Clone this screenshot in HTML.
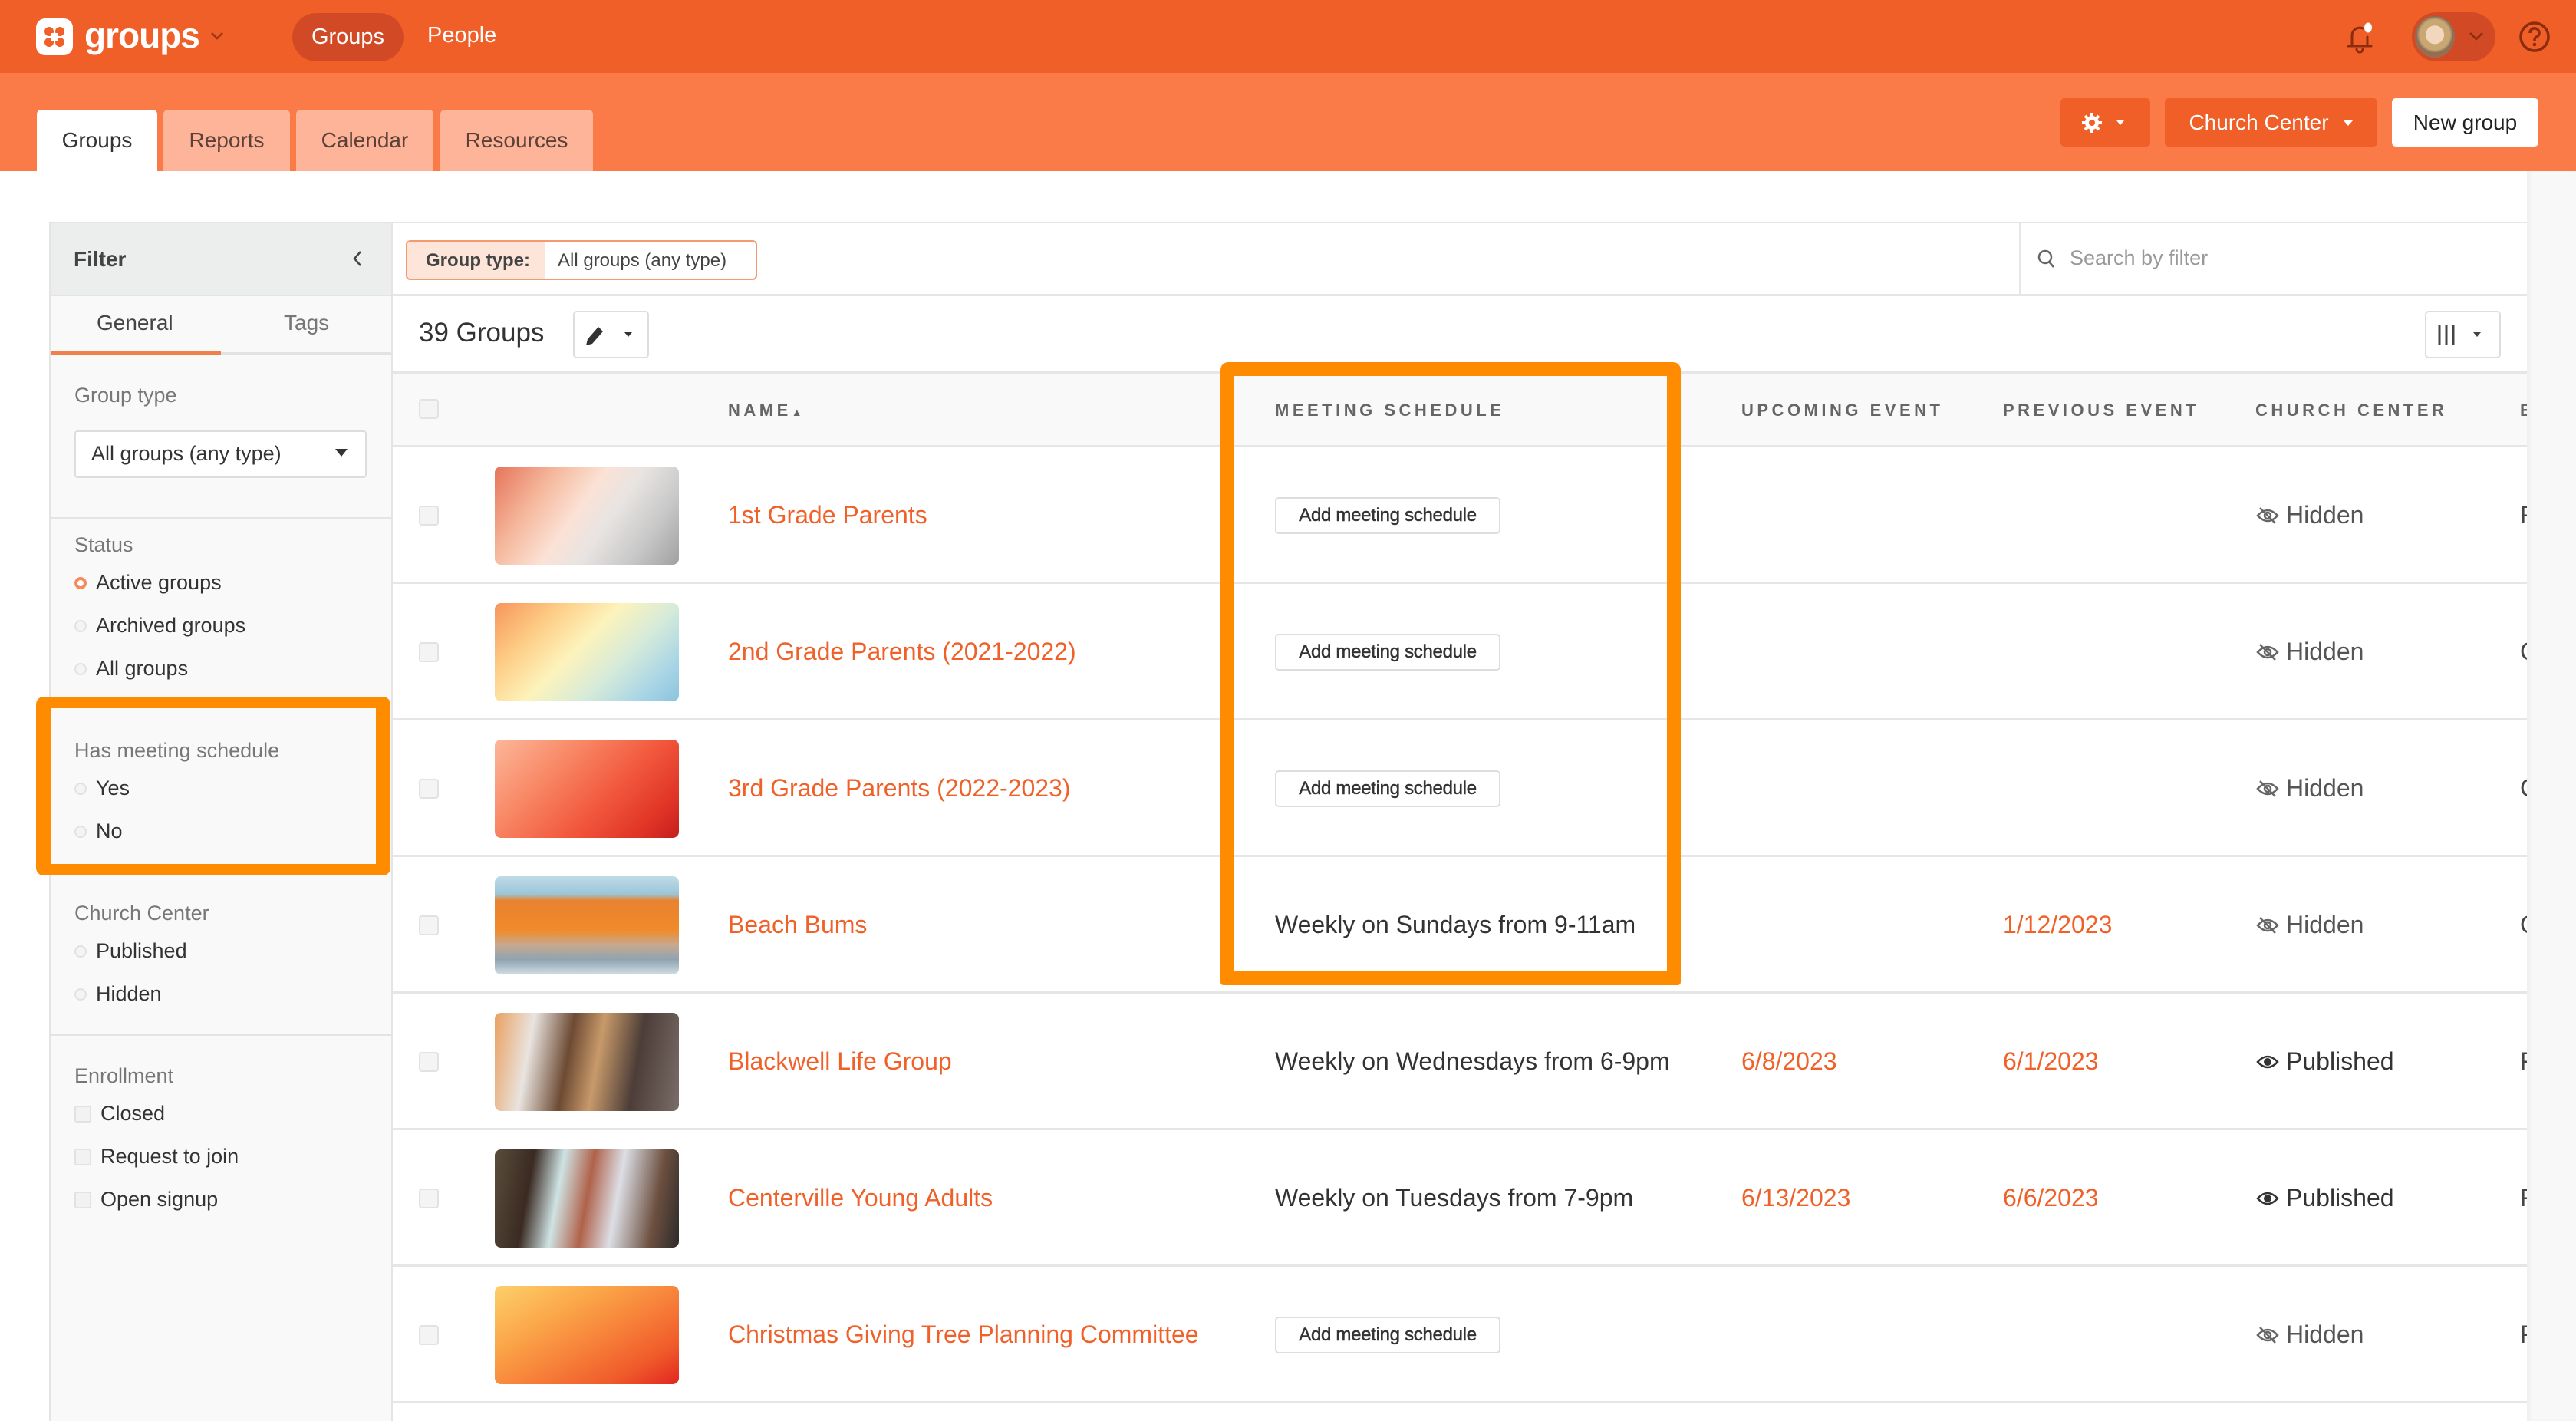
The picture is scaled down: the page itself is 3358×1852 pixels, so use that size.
<!DOCTYPE html>
<html><head><meta charset="utf-8"><style>
*{box-sizing:border-box;margin:0;padding:0}
body{width:3358px;height:1852px;overflow:hidden;background:#fff;font-family:"Liberation Sans",sans-serif;position:relative;color:#333}
.a{position:absolute}
.top{left:0;top:0;width:3358px;height:95px;background:#f05f28}
.sub{left:0;top:95px;width:3358px;height:128px;background:#fb7b48}
.tab{top:143px;height:80px;background:#fdb498;border-radius:6px 6px 0 0;font-size:28px;color:#5a4038;display:flex;align-items:center;justify-content:center}
.btn{border-radius:5px;display:flex;align-items:center;justify-content:center;font-size:28px}
.side{left:64px;top:289px;width:448px;height:1563px;background:#f9f9f9;border-left:2px solid #e4e4e4;border-right:2px solid #e4e4e4}
.lbl{font-size:27px;color:#777}
.opt{font-size:27px;color:#333;display:flex;align-items:center;gap:12px}
.rad{width:16px;height:16px;border-radius:50%;border:2px solid #e2e2e2;background:#f4f4f4}
.chk{width:22px;height:22px;border-radius:3px;border:2px solid #e2e2e2;background:#f2f2f2}
.th{font-size:22px;font-weight:bold;letter-spacing:4.5px;color:#666;top:522px}
.row{left:512px;width:2782px;height:178px;border-bottom:3px solid #e6e6e6}
.thumb{left:133px;top:25px;width:240px;height:128px;border-radius:8px}
.nm{left:437px;font-size:32px;color:#f0612a;top:70px}
.ams{left:1150px;top:65px;width:294px;height:48px;border:2px solid #ddd;border-radius:5px;font-size:24px;color:#333;display:flex;align-items:center;justify-content:center;letter-spacing:-0.3px;-webkit-text-stroke:0.5px #333}
.sch{left:1150px;top:70px;font-size:32px;color:#333}
.dt{font-size:32px;color:#f0612a;top:70px}
.cc{left:2428px;top:70px;font-size:32px;color:#555;display:flex;align-items:center;gap:8px}
.cbx{left:34px;top:76px;width:26px;height:26px;border:2px solid #e2e2e2;border-radius:4px;background:#f4f4f4}
.ex{left:2773px;top:70px;font-size:32px;color:#444}
</style></head><body>
<div class="a top"></div>
<div class="a" style="left:47px;top:24px;width:48px;height:48px;background:#fff;border-radius:12px"></div>
<svg class="a" style="left:47px;top:24px" width="48" height="48" viewBox="0 0 48 48"><circle cx="17" cy="17" r="6" fill="#f05f28"/><circle cx="31" cy="17" r="6" fill="#f05f28"/><circle cx="17" cy="31" r="6" fill="#f05f28"/><circle cx="31" cy="31" r="6" fill="#f05f28"/><rect x="19" y="19" width="10" height="10" fill="#fff"/></svg>
<div class="a" style="left:110px;top:19px;font-size:46px;color:#fff;font-weight:bold;letter-spacing:-1px">groups</div>
<svg class="a" style="left:274px;top:40px" width="18" height="14"><path d="M2 3 L9 10 L16 3" stroke="#9c3513" stroke-width="2.5" fill="none"/></svg>
<div class="a" style="left:381px;top:17px;width:145px;height:63px;background:#d24a25;border-radius:32px;color:#fff;font-size:29px;display:flex;align-items:center;justify-content:center">Groups</div>
<div class="a" style="left:557px;top:30px;color:#fff;font-size:29px">People</div>
<svg class="a" style="left:3052px;top:24px" width="48" height="48" viewBox="0 0 48 48"><path d="M14 36 V22 a10 10 0 0 1 14 -9 M34 24 V36 M9 36 H39 M20 40 a4 4 0 0 0 8 0" stroke="#8a2c0d" stroke-width="3" fill="none" stroke-linecap="round"/><ellipse cx="35" cy="12" rx="5" ry="6.5" fill="#fff"/></svg>
<div class="a" style="left:3144px;top:16px;width:109px;height:64px;background:#d24a25;border-radius:32px"></div>
<div class="a" style="left:3148px;top:21px;width:52px;height:54px;border-radius:50%;background:radial-gradient(circle at 50% 45%,#f2d7be 0 30%,#c9a772 31% 50%,#8a6e56 60%,#d36b2e 100%)"></div>
<svg class="a" style="left:3218px;top:40px" width="20" height="14"><path d="M2 3 L10 11 L18 3" stroke="#8a2c0d" stroke-width="2.5" fill="none"/></svg>
<svg class="a" style="left:3282px;top:26px" width="44" height="44" viewBox="0 0 44 44"><circle cx="22" cy="22" r="18" stroke="#8a2c0d" stroke-width="3.5" fill="none"/><path d="M16 17 a6 6 0 1 1 8 5.5 c-2 1 -2 2.5 -2 4.5" stroke="#8a2c0d" stroke-width="3.5" fill="none"/><circle cx="22" cy="32" r="2.3" fill="#8a2c0d"/></svg>

<div class="a sub"></div>
<div class="a tab" style="left:48px;width:157px;background:#fff;color:#333">Groups</div>
<div class="a tab" style="left:213px;width:165px">Reports</div>
<div class="a tab" style="left:386px;width:179px">Calendar</div>
<div class="a tab" style="left:574px;width:199px">Resources</div>
<div class="a btn" style="left:2686px;top:128px;width:117px;height:63px;background:#f05f28">
<svg width="64" height="30" viewBox="0 0 64 30"><g transform="translate(14,15)" fill="#fff"><circle r="9"/><g stroke="#fff" stroke-width="4"><path d="M0 -13V13M-13 0H13M-9 -9L9 9M-9 9L9 -9"/></g><circle r="4" fill="#f05f28"/></g><path d="M46 12 L56 12 L51 18Z" fill="#fff"/></svg></div>
<div class="a btn" style="left:2822px;top:128px;width:277px;height:63px;background:#f05f28;color:#fff;gap:18px">Church Center <svg width="14" height="8"><path d="M0 0H14L7 8Z" fill="#fff"/></svg></div>
<div class="a btn" style="left:3118px;top:128px;width:191px;height:63px;background:#fff;color:#222">New group</div>

<div class="a side"></div>
<div class="a" style="left:64px;top:289px;width:448px;height:97px;background:#eceeee;border:2px solid #e4e4e4"></div>
<div class="a" style="left:96px;top:322px;font-size:28px;font-weight:bold;color:#444">Filter</div>
<svg class="a" style="left:459px;top:326px" width="14" height="22"><path d="M11 2 L3 11 L11 20" stroke="#444" stroke-width="2.5" fill="none"/></svg>
<div class="a" style="left:126px;top:405px;font-size:28px;color:#444">General</div>
<div class="a" style="left:370px;top:405px;font-size:28px;color:#777">Tags</div>
<div class="a" style="left:66px;top:458px;width:222px;height:5px;background:#f0804b"></div>
<div class="a" style="left:288px;top:459px;width:222px;height:4px;background:#e2e2e2"></div>
<div class="a lbl" style="left:97px;top:500px">Group type</div>
<div class="a" style="left:97px;top:561px;width:381px;height:62px;background:#fff;border:2px solid #ddd;border-radius:4px"></div>
<div class="a" style="left:119px;top:576px;font-size:27px;color:#333">All groups (any type)</div>
<svg class="a" style="left:437px;top:585px" width="16" height="10"><path d="M0 0H16L8 10Z" fill="#333"/></svg>
<div class="a" style="left:66px;top:674px;width:444px;height:2px;background:#e4e4e4"></div>
<div class="a lbl" style="left:97px;top:695px">Status</div>
<div class="a opt" style="left:97px;top:744px"><div class="rad" style="border:4px solid #f58a5a;background:#fff"></div>Active groups</div>
<div class="a opt" style="left:97px;top:800px"><div class="rad"></div>Archived groups</div>
<div class="a opt" style="left:97px;top:856px"><div class="rad"></div>All groups</div>
<div class="a lbl" style="left:97px;top:963px">Has meeting schedule</div>
<div class="a opt" style="left:97px;top:1012px"><div class="rad"></div>Yes</div>
<div class="a opt" style="left:97px;top:1068px"><div class="rad"></div>No</div>
<div class="a" style="left:47px;top:908px;width:462px;height:233px;border:19px solid #ff8c00;border-width:15px 19px 15px 19px;border-radius:10px"></div>
<div class="a lbl" style="left:97px;top:1175px">Church Center</div>
<div class="a opt" style="left:97px;top:1224px"><div class="rad"></div>Published</div>
<div class="a opt" style="left:97px;top:1280px"><div class="rad"></div>Hidden</div>
<div class="a" style="left:66px;top:1348px;width:444px;height:2px;background:#e4e4e4"></div>
<div class="a lbl" style="left:97px;top:1387px">Enrollment</div>
<div class="a opt" style="left:97px;top:1436px"><div class="chk"></div>Closed</div>
<div class="a opt" style="left:97px;top:1492px"><div class="chk"></div>Request to join</div>
<div class="a opt" style="left:97px;top:1548px"><div class="chk"></div>Open signup</div>

<div class="a" style="left:512px;top:289px;width:2782px;height:97px;border-top:2px solid #e6e6e6;border-bottom:3px solid #e6e6e6"></div>
<div class="a" style="left:529px;top:313px;width:458px;height:52px;border:2px solid #f59a6e;border-radius:6px;background:#fff;overflow:hidden">
<div class="a" style="left:0;top:0;width:180px;height:52px;background:#fde5d9"></div>
<div class="a" style="left:24px;top:11px;font-size:24px;color:#444;font-weight:bold">Group type:</div>
<div class="a" style="left:196px;top:11px;font-size:24px;color:#444">All groups (any type)</div></div>
<div class="a" style="left:2632px;top:289px;width:2px;height:97px;background:#e6e6e6"></div>
<svg class="a" style="left:2655px;top:324px" width="24" height="28"><circle cx="11" cy="11" r="8" stroke="#666" stroke-width="2.5" fill="none"/><path d="M16 17 L22 24" stroke="#666" stroke-width="2.5"/></svg>
<div class="a" style="left:2698px;top:321px;font-size:27px;color:#999">Search by filter</div>

<div class="a" style="left:546px;top:414px;font-size:35px;color:#333">39 Groups</div>
<div class="a" style="left:747px;top:405px;width:99px;height:62px;border:2px solid #ddd;border-radius:5px;background:#fff"></div>
<svg class="a" style="left:760px;top:420px" width="70" height="34"><path d="M4 30 L6 22 L20 6 L26 12 L12 28 Z" fill="#333"/><path d="M54 13 H64 L59 19Z" fill="#333"/></svg>
<div class="a" style="left:3161px;top:405px;width:99px;height:62px;border:2px solid #ddd;border-radius:5px;background:#fff"></div>
<svg class="a" style="left:3176px;top:420px" width="70" height="34"><path d="M4 3 V30 M13 3 V30 M22 3 V30" stroke="#444" stroke-width="3"/><path d="M48 13 H58 L53 19Z" fill="#444"/></svg>

<div class="a" style="left:512px;top:484px;width:2782px;height:99px;background:#f9f9f9;border-top:3px solid #e6e6e6;border-bottom:3px solid #e6e6e6"></div>
<div class="a" style="left:546px;top:520px;width:26px;height:26px;border:2px solid #e2e2e2;border-radius:4px;background:#f4f4f4"></div>
<div class="a th" style="left:949px">NAME<span style="font-size:14px;letter-spacing:0">▲</span></div>
<div class="a th" style="left:1662px">MEETING SCHEDULE</div>
<div class="a th" style="left:2270px">UPCOMING EVENT</div>
<div class="a th" style="left:2611px">PREVIOUS EVENT</div>
<div class="a th" style="left:2940px">CHURCH CENTER</div>
<div class="a th" style="left:3285px">E</div>

<div class="a row" style="top:583px"><div class="a cbx"></div><div class="a thumb" style="background:linear-gradient(125deg,#e6735a 0%,#f5b89c 25%,#fbe2d6 45%,#e8e4e2 60%,#c8c8c8 80%,#a0a0a0 100%)"></div><div class="a nm">1st Grade Parents</div><div class="a ams">Add meeting schedule</div><div class="a cc"><svg width="32" height="26" viewBox="0 0 32 26"><path d="M3 13 Q16 -1 29 13 Q16 27 3 13Z" stroke="#666" stroke-width="2.5" fill="none"/><circle cx="16" cy="13" r="4" stroke="#666" stroke-width="2.5" fill="none"/><path d="M6 3 L26 23" stroke="#666" stroke-width="2.5"/></svg>Hidden</div><div class="a ex">F</div></div>
<div class="a row" style="top:761px"><div class="a cbx"></div><div class="a thumb" style="background:linear-gradient(135deg,#f7955a 0%,#fdcf88 25%,#fdf3bb 45%,#d7ebd9 65%,#a8d5e6 85%,#8cc3dd 100%)"></div><div class="a nm">2nd Grade Parents (2021-2022)</div><div class="a ams">Add meeting schedule</div><div class="a cc"><svg width="32" height="26" viewBox="0 0 32 26"><path d="M3 13 Q16 -1 29 13 Q16 27 3 13Z" stroke="#666" stroke-width="2.5" fill="none"/><circle cx="16" cy="13" r="4" stroke="#666" stroke-width="2.5" fill="none"/><path d="M6 3 L26 23" stroke="#666" stroke-width="2.5"/></svg>Hidden</div><div class="a ex">C</div></div>
<div class="a row" style="top:939px"><div class="a cbx"></div><div class="a thumb" style="background:linear-gradient(135deg,#fcb79a 0%,#f88a68 30%,#f2583c 60%,#df3326 85%,#c31d1d 100%)"></div><div class="a nm">3rd Grade Parents (2022-2023)</div><div class="a ams">Add meeting schedule</div><div class="a cc"><svg width="32" height="26" viewBox="0 0 32 26"><path d="M3 13 Q16 -1 29 13 Q16 27 3 13Z" stroke="#666" stroke-width="2.5" fill="none"/><circle cx="16" cy="13" r="4" stroke="#666" stroke-width="2.5" fill="none"/><path d="M6 3 L26 23" stroke="#666" stroke-width="2.5"/></svg>Hidden</div><div class="a ex">C</div></div>
<div class="a row" style="top:1117px"><div class="a cbx"></div><div class="a thumb" style="background:linear-gradient(180deg,#bfdbe8 0%,#9bc6d8 18%,#e8822f 25%,#f08a2a 55%,#c7a98e 70%,#8fa3b1 85%,#d2dde3 100%)"></div><div class="a nm">Beach Bums</div><div class="a sch">Weekly on Sundays from 9-11am</div><div class="a dt" style="left:2099px">1/12/2023</div><div class="a cc"><svg width="32" height="26" viewBox="0 0 32 26"><path d="M3 13 Q16 -1 29 13 Q16 27 3 13Z" stroke="#666" stroke-width="2.5" fill="none"/><circle cx="16" cy="13" r="4" stroke="#666" stroke-width="2.5" fill="none"/><path d="M6 3 L26 23" stroke="#666" stroke-width="2.5"/></svg>Hidden</div><div class="a ex">C</div></div>
<div class="a row" style="top:1295px"><div class="a cbx"></div><div class="a thumb" style="background:linear-gradient(100deg,#e9a060 0%,#e9e4e0 20%,#6d4a33 40%,#c89a6a 55%,#4c3d38 75%,#7a6c66 100%)"></div><div class="a nm">Blackwell Life Group</div><div class="a sch">Weekly on Wednesdays from 6-9pm</div><div class="a dt" style="left:1758px">6/8/2023</div><div class="a dt" style="left:2099px">6/1/2023</div><div class="a cc" style="color:#333"><svg width="32" height="26" viewBox="0 0 32 26"><path d="M3 13 Q16 -1 29 13 Q16 27 3 13Z" stroke="#333" stroke-width="2.5" fill="none"/><circle cx="16" cy="13" r="5" fill="#333"/></svg>Published</div><div class="a ex">F</div></div>
<div class="a row" style="top:1473px"><div class="a cbx"></div><div class="a thumb" style="background:linear-gradient(100deg,#5a4d3c 0%,#3a2a22 20%,#cfe3e4 35%,#b0624a 50%,#dcdfe6 65%,#6d5040 85%,#2c2a2a 100%)"></div><div class="a nm">Centerville Young Adults</div><div class="a sch">Weekly on Tuesdays from 7-9pm</div><div class="a dt" style="left:1758px">6/13/2023</div><div class="a dt" style="left:2099px">6/6/2023</div><div class="a cc" style="color:#333"><svg width="32" height="26" viewBox="0 0 32 26"><path d="M3 13 Q16 -1 29 13 Q16 27 3 13Z" stroke="#333" stroke-width="2.5" fill="none"/><circle cx="16" cy="13" r="5" fill="#333"/></svg>Published</div><div class="a ex">F</div></div>
<div class="a row" style="top:1651px"><div class="a cbx"></div><div class="a thumb" style="background:linear-gradient(150deg,#fdd06a 0%,#fba84a 30%,#f7823a 55%,#f05a2a 80%,#e02620 100%)"></div><div class="a nm">Christmas Giving Tree Planning Committee</div><div class="a ams">Add meeting schedule</div><div class="a cc"><svg width="32" height="26" viewBox="0 0 32 26"><path d="M3 13 Q16 -1 29 13 Q16 27 3 13Z" stroke="#666" stroke-width="2.5" fill="none"/><circle cx="16" cy="13" r="4" stroke="#666" stroke-width="2.5" fill="none"/><path d="M6 3 L26 23" stroke="#666" stroke-width="2.5"/></svg>Hidden</div><div class="a ex">F</div></div>

<div class="a" style="left:1591px;top:472px;width:600px;height:812px;border:18px solid #ff8c00;border-radius:10px 10px 4px 4px"></div>
<div class="a" style="left:3294px;top:223px;width:64px;height:1629px;background:#f8f8f8;box-shadow:inset 4px 0 6px rgba(0,0,0,0.04)"></div>
</body></html>
